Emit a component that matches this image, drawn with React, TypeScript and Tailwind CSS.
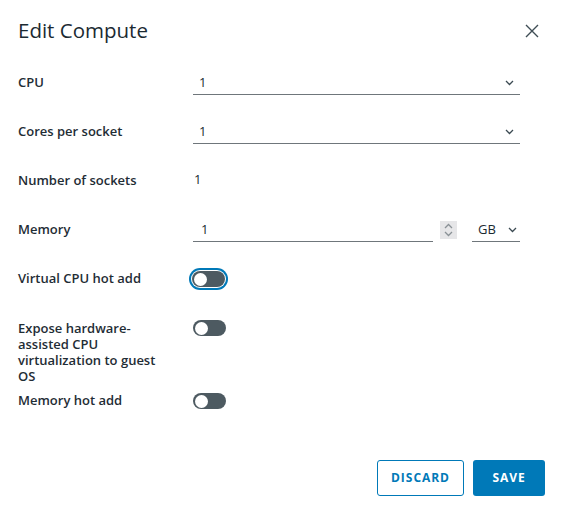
import { ReactNode } from 'react';

const font = { fontFamily: '"Open Sans", "Noto Sans", sans-serif' };

function Chevron({ up = false, className = '' }: { up?: boolean; className?: string }) {
  return (
    <svg width="9" height="6" viewBox="0 0 9 6" className={className}>
      <path
        d={up ? 'M1 5 L4.5 1.5 L8 5' : 'M1 1 L4.5 4.5 L8 1'}
        fill="none"
        stroke="currentColor"
        strokeWidth="1.3"
      />
    </svg>
  );
}

function Toggle({ focused = false }: { focused?: boolean }) {
  return (
    <div
      className={
        'flex items-center rounded-full ' +
        (focused ? 'p-[1px] ring-2 ring-[#0079b8] bg-white' : '')
      }
    >
      <div className="flex h-4 w-[33px] items-center rounded-full bg-[#4d5a61] px-[2px]">
        <div className="h-[13px] w-[13px] rounded-full bg-white" />
      </div>
    </div>
  );
}

function Row({ label, children, className = '' }: { label: ReactNode; children: ReactNode; className?: string }) {
  return (
    <div className={'flex ' + className}>
      <div className="w-[175px] shrink-0 text-[13px] font-semibold text-[#1f2d35]">{label}</div>
      <div className="w-[327px]">{children}</div>
    </div>
  );
}

function Select({ value }: { value: string }) {
  return (
    <div className="flex h-6 items-center justify-between border-b border-[#6f767b] pl-[6px] pr-[6px] text-[13px] text-[#1b2a32]">
      <span>{value}</span>
      <Chevron className="text-[#3b4a52]" />
    </div>
  );
}

export default function App() {
  return (
    <div style={font} className="h-[513px] w-[563px] bg-white px-[18px] text-[#1f2d35]">
      <div className="flex items-center justify-between pt-[18px]">
        <h1 className="text-[20.5px] leading-6 text-[#1b2a32]">Edit Compute</h1>
        <svg width="14" height="14" viewBox="0 0 14 14" className="mr-[6px] mt-[2px] text-[#3f4d55]">
          <path d="M1 1 L13 13 M13 1 L1 13" stroke="currentColor" strokeWidth="1.4" fill="none" />
        </svg>
      </div>

      <div className="mt-[29px] flex flex-col">
        <Row label={<div className="flex h-6 items-center">CPU</div>}>
          <Select value="1" />
        </Row>

        <Row className="mt-[25px]" label={<div className="flex h-6 items-center">Cores per socket</div>}>
          <Select value="1" />
        </Row>

        <Row className="mt-[25px]" label={<div className="flex h-6 items-center">Number of sockets</div>}>
          <div className="flex h-6 items-center pl-[1px] pb-[2px] text-[13px] text-[#1b2a32]">1</div>
        </Row>

        <Row className="mt-[25px]" label={<div className="flex h-6 items-center">Memory</div>}>
          <div className="flex items-end">
            <div className="flex h-6 w-[240px] items-center justify-between border-b border-[#6f767b] pl-[8px] pr-[1px] text-[13px] text-[#1b2a32]">
              <span>1</span>
            </div>
            <div className="mb-[3px] ml-[7px] flex h-[18px] w-[17px] flex-col items-center justify-center gap-[2px] bg-[#e6e6e8] text-[#8a9196]">
              <Chevron up />
              <Chevron />
            </div>
            <div className="ml-[15px] flex h-6 w-[48px] items-center justify-between border-b border-[#6f767b] pl-[6px] pr-[3px] text-[13px] text-[#1b2a32]">
              <span>GB</span>
              <Chevron className="text-[#3b4a52]" />
            </div>
          </div>
        </Row>

        <Row className="mt-[25px]" label={<div className="flex h-6 items-center">Virtual CPU hot add</div>}>
          <div className="flex h-6 items-center">
            <div className="-ml-[2px]">
              <Toggle focused />
            </div>
          </div>
        </Row>

        <Row
          className="mt-[29px]"
          label={
            <div className="w-[140px] leading-4">
              Expose hardware-assisted CPU virtualization to guest OS
            </div>
          }
        >
          <div className="flex h-4 items-center">
            <Toggle />
          </div>
        </Row>

        <Row className="mt-[9px]" label={<div className="flex h-4 items-center">Memory hot add</div>}>
          <div className="flex h-4 items-center">
            <Toggle />
          </div>
        </Row>
      </div>

      <div className="mt-[51px] flex justify-end gap-[9px] pr-[0px]">
        <button className="h-9 w-[87px] rounded-[3px] border border-[#0079b8] bg-white text-[12px] font-bold tracking-[0.08em] text-[#0079b8]">
          DISCARD
        </button>
        <button className="h-9 w-[72px] rounded-[3px] bg-[#0079b8] text-[12px] font-bold tracking-[0.08em] text-white">
          SAVE
        </button>
      </div>
    </div>
  );
}
